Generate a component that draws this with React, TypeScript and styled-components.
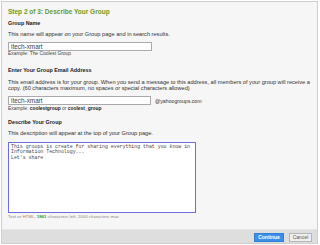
import React from 'react';
import styled, {createGlobalStyle} from 'styled-components';

const GlobalStyle = createGlobalStyle`
  html, body {
    margin: 0;
    padding: 0;
    background: #ffffff;
  }
  body {
    font-family: "Liberation Sans", Arial, sans-serif;
    color: #333;
  }
`;

const textareaText =
  'This groups is create for sharing everything that you know in\nInformation Technology...\nLet\'s share';

export default function App() {
  return (
    <>
      <GlobalStyle/>
      <Panel>
        <Body>
          <Title>Step 2 of 3: Describe Your Group</Title>

          {/* Group name */}
          <Label $top={4}>Group Name</Label>
          <Help $top={4}>This name will appear on your Group page and in search results.</Help>
          <TextInput $top={5} $width={144} defaultValue="itech-xmart" readOnly/>
          <Example>Example: The Coolest Group</Example>

          {/* Email */}
          <Label $top={10}>Enter Your Group Email Address</Label>
          <Help $top={5}>
            This email address is for your group. When you send a message to this address, all members of your group will receive a
            <br/>
            copy. (60 characters maximum, no spaces or special characters allowed)
          </Help>
          <InputRow>
            <TextInput $width={143} defaultValue="itech-xmart" readOnly/>
            <Domain>@yahoogroups.com</Domain>
          </InputRow>
          <Example $top={1}>Example: <b>coolestgroup</b> or <b>coolest_group</b></Example>

          {/* Description */}
          <Label $top={7}>Describe Your Group</Label>
          <Help $top={4}>This description will appear at the top of your Group page.</Help>
          <Description defaultValue={textareaText} readOnly/>
          <Counter>Text or HTML, <strong>1861</strong> characters left, 2000 characters max</Counter>
        </Body>

        <Footer>
          <PrimaryButton>Continue</PrimaryButton>
          <SecondaryButton>Cancel</SecondaryButton>
        </Footer>
      </Panel>
    </>
  );
}

const Panel = styled.div`
  box-sizing: border-box;
  margin: 1px 0 0 1px;
  width: 317px;
  height: 243px;
  border: 1px solid #cfcfcf;
  background: #f6f6f6;
  display: flex;
  flex-direction: column;
`;

const Body = styled.div`
  display: flex;
  flex-direction: column;
  align-items: flex-start;
  padding: 5px 6px 0 6px;
`;

const Title = styled.div`
  font-size: 6.5px;
  line-height: 9px;
  font-weight: bold;
  color: #6b9b2c;
`;

const Label = styled.div<{ $top?: number }>`
  margin-top: ${p => p.$top ?? 0}px;
  font-size: 5.4px;
  line-height: 7px;
  font-weight: bold;
  color: #222;
`;

const Help = styled.div<{ $top?: number }>`
  margin-top: ${p => p.$top ?? 0}px;
  font-size: 5.65px;
  line-height: 6px;
  color: #333;
  white-space: nowrap;
`;

const TextInput = styled.input<{ $top?: number; $width: number }>`
  box-sizing: border-box;
  margin: ${p => p.$top ?? 0}px 0 0 0;
  width: ${p => p.$width}px;
  height: 9px;
  padding: 0 2px;
  border: 1px solid #a9a9a9;
  background: #fff;
  font-family: "Liberation Sans", Arial, sans-serif;
  font-size: 6.4px;
  color: #444;
  outline: none;
`;

const InputRow = styled.div`
  margin-top: 5px;
  display: flex;
  align-items: center;
  gap: 4px;
`;

const Domain = styled.span`
  font-size: 5.2px;
  color: #333;
`;

const Example = styled.div<{ $top?: number }>`
  margin-top: ${p => p.$top ?? 0}px;
  font-size: 4.9px;
  line-height: 6px;
  color: #444;

  b {
    color: #222;
  }
`;

const Description = styled.textarea`
  box-sizing: border-box;
  margin-top: 6px;
  width: 188px;
  height: 71px;
  padding: 1px 2px;
  border: 1px solid #6d6dd8;
  background: #fff;
  resize: none;
  font-family: "Liberation Mono", "Courier New", monospace;
  font-size: 4.9px;
  line-height: 5.4px;
  color: #444;
  outline: none;
  white-space: pre;
  overflow: hidden;
`;

const Counter = styled.div`
  margin-top: 1px;
  font-size: 4.4px;
  line-height: 6px;
  color: #888;

  strong {
    color: #2e9a2e;
  }
`;

const Footer = styled.div`
  margin-top: auto;
  height: 14px;
  box-sizing: border-box;
  padding: 3px 5px 0 0;
  background: #dedede;
  border-top: 1px solid #e6e6e6;
  display: flex;
  justify-content: flex-end;
  align-items: flex-start;
  gap: 5px;
`;

const PrimaryButton = styled.button`
  box-sizing: border-box;
  width: 30px;
  height: 9px;
  padding: 0;
  border: 1px solid #2f7fd6;
  background: #3d8fe8;
  color: #fff;
  font-family: "Liberation Sans", Arial, sans-serif;
  font-size: 5px;
  font-weight: bold;
  line-height: 7px;
`;

const SecondaryButton = styled.button`
  box-sizing: border-box;
  width: 23px;
  height: 9px;
  padding: 0;
  border: 1px solid #b5b5b5;
  background: #efefef;
  color: #555;
  font-family: "Liberation Sans", Arial, sans-serif;
  font-size: 5px;
  line-height: 7px;
`;
